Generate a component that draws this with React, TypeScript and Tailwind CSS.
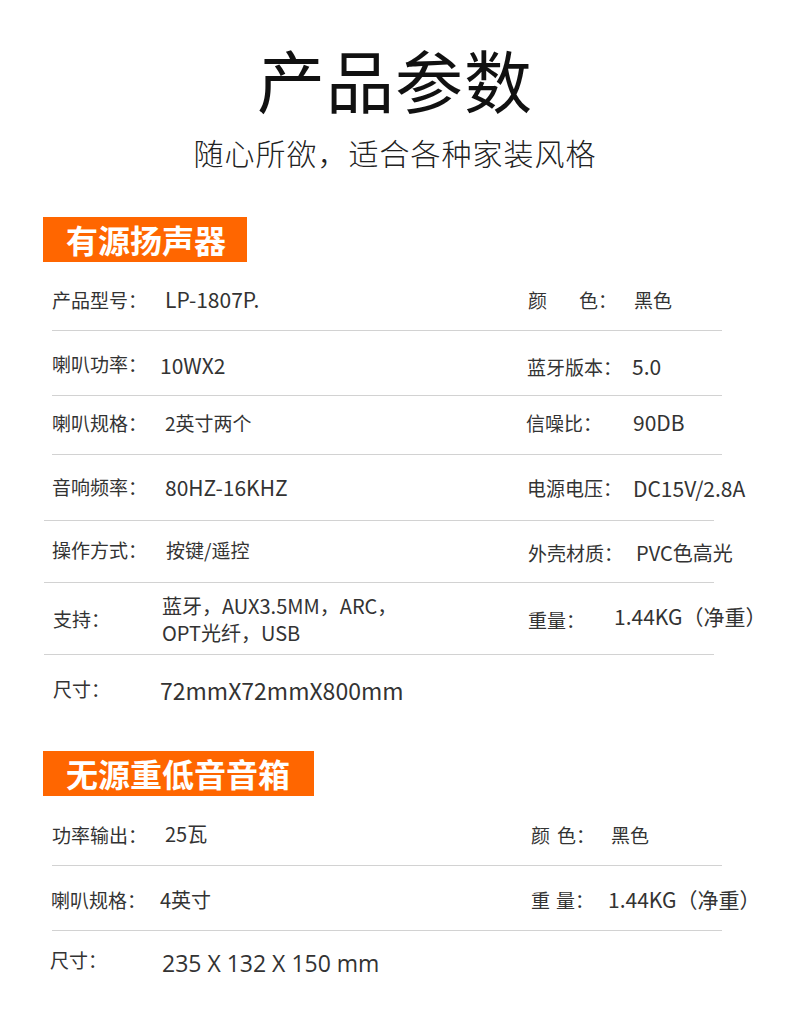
import * as React from "react";

const FONT = "font-['Noto_Sans_CJK_SC','Noto_Sans',sans-serif]";

type RowProps = {
  className: string;
  left: React.ReactNode;
  right?: React.ReactNode;
  border?: boolean;
};

function Row({ className, left, right, border = true }: RowProps) {
  return (
    <div
      className={`flex items-center whitespace-nowrap text-[#333] ${border ? "border-b border-[#d2d2d2]" : ""} ${className}`}
    >
      {left}
      {right}
    </div>
  );
}

function SectionTitle({ children, className }: { children: React.ReactNode; className: string }) {
  return (
    <div
      className={`ml-[43px] h-[45px] bg-[#ff6600] text-white text-[32px] font-bold leading-[45px] pl-[23px] ${className}`}
    >
      {children}
    </div>
  );
}

export default function App(): React.JSX.Element {
  return (
    <div className={`w-[790px] h-[1013px] bg-white overflow-hidden ${FONT}`}>
      {/* Header */}
      <div className="pt-[39px] text-center">
        <h1 className="text-[68px] leading-[80px] font-normal text-[#111] tracking-[1px]">产品参数</h1>
        <p className="mt-[13px] text-[30px] leading-[40px] font-light text-[#222] tracking-[1px]">
          随心所欲，适合各种家装风格
        </p>
      </div>

      {/* 有源扬声器 */}
      <SectionTitle className="mt-[45px] w-[204px]">有源扬声器</SectionTitle>

      <div className="text-[19px]">
        <Row
          className="ml-[52px] w-[670px] h-[69px] pt-[8px]"
          left={
            <div className="w-[476px] shrink-0 flex items-center">
              <span className="w-[113px] shrink-0">产品型号：</span>
              <span className="text-[21px]">LP-1807P.</span>
            </div>
          }
          right={
            <div className="flex items-center shrink-0">
              <span>颜</span>
              <span className="ml-[32px] w-[55px] shrink-0">色：</span>
              <span>黑色</span>
            </div>
          }
        />
        <Row
          className="ml-[52px] w-[670px] h-[65px] pt-[2px]"
          left={
            <div className="w-[475px] shrink-0 flex items-center">
              <span className="w-[108px] shrink-0">喇叭功率：</span>
              <span className="text-[21px] mt-[4px]">10WX2</span>
            </div>
          }
          right={
            <div className="flex items-center shrink-0 mt-[6px]">
              <span className="w-[105px] shrink-0">蓝牙版本：</span>
              <span className="text-[21px]">5.0</span>
            </div>
          }
        />
        <Row
          className="ml-[52px] w-[670px] h-[59px] pb-[4px]"
          left={
            <div className="w-[474px] shrink-0 flex items-center">
              <span className="w-[113px] shrink-0">喇叭规格：</span>
              <span>2英寸两个</span>
            </div>
          }
          right={
            <div className="flex items-center shrink-0">
              <span className="w-[107px] shrink-0">信噪比：</span>
              <span className="text-[21px]">90DB</span>
            </div>
          }
        />
        <Row
          className="ml-[44px] w-[670px] h-[66px] pl-[8px]"
          left={
            <div className="w-[475px] shrink-0 flex items-center">
              <span className="w-[113px] shrink-0">音响频率：</span>
              <span className="text-[21px]">80HZ-16KHZ</span>
            </div>
          }
          right={
            <div className="flex items-center shrink-0 mt-[2px]">
              <span className="w-[106px] shrink-0">电源电压：</span>
              <span className="text-[21px]">DC15V/2.8A</span>
            </div>
          }
        />
        <Row
          className="ml-[44px] w-[670px] h-[62px] pl-[8px] pb-[3px]"
          left={
            <div className="w-[476px] shrink-0 flex items-center">
              <span className="w-[114px] shrink-0">操作方式：</span>
              <span>按键/遥控</span>
            </div>
          }
          right={
            <div className="flex items-center shrink-0 mt-[6px]">
              <span className="w-[108px] shrink-0">外壳材质：</span>
              <span className="text-[20px]">PVC色高光</span>
            </div>
          }
        />
        <Row
          className="ml-[44px] w-[670px] h-[72px] pl-[9px] pt-[1px]"
          left={
            <div className="w-[475px] shrink-0 flex items-center">
              <span className="w-[109px] shrink-0">支持：</span>
              <span className="leading-[27px] text-[20px]">
                蓝牙，AUX3.5MM，ARC，
                <br />
                OPT光纤，USB
              </span>
            </div>
          }
          right={
            <div className="flex items-center shrink-0">
              <span className="w-[86px] shrink-0 mt-[2px]">重量：</span>
              <span className="text-[21px] -mt-[4px]">1.44KG（净重）</span>
            </div>
          }
        />
        <Row
          border={false}
          className="ml-[53px] h-[68px]"
          left={
            <div className="flex items-center">
              <span className="w-[107px] shrink-0">尺寸：</span>
              <span className="text-[23px] mt-[2px]">72mmX72mmX800mm</span>
            </div>
          }
        />
      </div>

      {/* 无源重低音音箱 */}
      <SectionTitle className="mt-[28px] w-[271px]">无源重低音音箱</SectionTitle>

      <div className="text-[19px]">
        <Row
          className="ml-[52px] w-[670px] h-[70px] pt-[9px]"
          left={
            <div className="w-[479px] shrink-0 flex items-center">
              <span className="w-[113px] shrink-0">功率输出：</span>
              <span className="text-[20px] -mt-[2px]">25瓦</span>
            </div>
          }
          right={
            <div className="flex items-center shrink-0">
              <span>颜</span>
              <span className="ml-[7px] w-[54px] shrink-0">色：</span>
              <span>黑色</span>
            </div>
          }
        />
        <Row
          className="ml-[52px] w-[670px] h-[65px] pt-[4px]"
          left={
            <div className="w-[479px] shrink-0 flex items-center">
              <span className="w-[109px] shrink-0 -ml-[1px]">喇叭规格：</span>
              <span className="text-[20px]">4英寸</span>
            </div>
          }
          right={
            <div className="flex items-center shrink-0">
              <span>重</span>
              <span className="ml-[6px] w-[52px] shrink-0">量：</span>
              <span className="text-[21px]">1.44KG（净重）</span>
            </div>
          }
        />
        <Row
          border={false}
          className="ml-[50px] h-[62px]"
          left={
            <div className="flex items-center">
              <span className="w-[112px] shrink-0 -mt-[4px]">尺寸：</span>
              <span className="text-[23px] font-['Open_Sans',sans-serif] mt-[2px]">
                235 X 132 X 150 mm
              </span>
            </div>
          }
        />
      </div>
    </div>
  );
}
